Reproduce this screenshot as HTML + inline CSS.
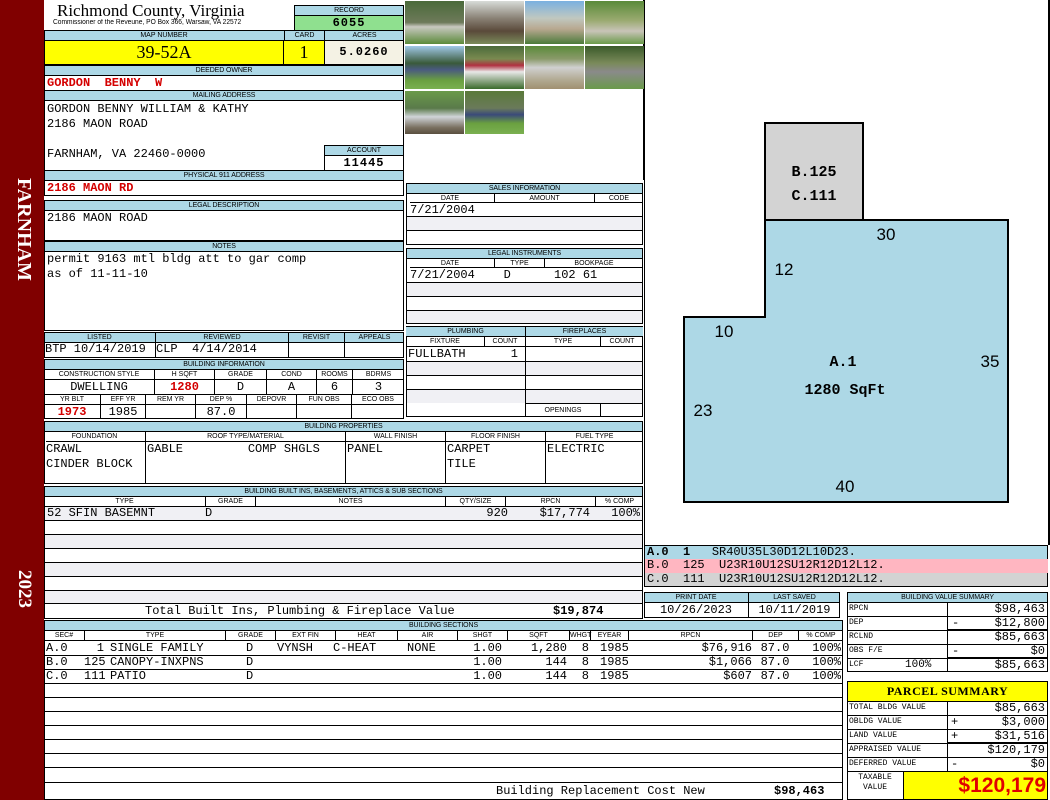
<!DOCTYPE html>
<html><head><meta charset="utf-8"><style>
*{box-sizing:border-box;margin:0;padding:0}
body{width:1050px;height:800px;position:relative;background:#fff;overflow:hidden;font-family:"Liberation Mono",monospace;font-size:12px;color:#000}
div{position:absolute}
.h{background:#add8e6;font-family:"Liberation Sans",sans-serif;font-size:7px;text-align:center;line-height:10px;height:10px;border:1px solid #000;border-bottom:none;letter-spacing:-0.1px}
.l{font-family:"Liberation Sans",sans-serif;font-size:7px;text-align:center;line-height:10px;height:10px;border:1px solid #000;border-bottom:none;border-right:none}
.bx{border:1px solid #000}
.v{line-height:15px;white-space:pre}
.r{color:#d40000;font-weight:bold}
.s{background:#f0f0f4}
.c{text-align:center}
.rt{text-align:right}
</style></head><body>
<div style="left:0;top:0;width:44px;height:800px;background:#800000"></div>
<div style="left:8px;top:178px;width:30px;height:130px;color:#fff;font-family:'Liberation Serif',serif;font-size:20px;font-weight:bold;writing-mode:vertical-rl;line-height:28px">FARNHAM</div>
<div style="left:8px;top:570px;width:30px;height:60px;color:#fff;font-family:'Liberation Serif',serif;font-size:19px;font-weight:bold;writing-mode:vertical-rl;line-height:28px">2023</div>

<div style="left:57px;top:1px;font-family:'Liberation Serif',serif;font-size:17px;white-space:nowrap">Richmond County, Virginia</div>
<div style="left:53px;top:19px;font-family:'Liberation Sans',sans-serif;font-size:7px;white-space:nowrap;transform:scaleX(0.95);transform-origin:left">Commissioner of the Reveune, PO Box 366, Warsaw, VA 22572</div>
<div class="h" style="left:294px;top:5px;width:110px">RECORD</div>
<div style="left:294px;top:15px;width:110px;height:16px;background:#8fe08f;border:1px solid #000;text-align:center;font-weight:bold;line-height:14px;letter-spacing:1px">6055</div>

<div class="h" style="left:44px;top:30px;width:360px"></div>
<div class="l" style="left:44px;top:30px;width:240px;border-left:none">MAP NUMBER</div>
<div class="l" style="left:284px;top:30px;width:40px">CARD</div>
<div class="l" style="left:324px;top:30px;width:80px">ACRES</div>
<div class="bx" style="left:44px;top:40px;width:240px;height:25px;background:#ffff00;text-align:center;font-family:'Liberation Serif',serif;font-size:18px;line-height:23px">39-52A</div>
<div class="bx" style="left:283px;top:40px;width:42px;height:25px;background:#ffff00;text-align:center;font-family:'Liberation Serif',serif;font-size:18px;line-height:23px">1</div>
<div class="bx" style="left:324px;top:40px;width:80px;height:25px;background:#f4f2e4;text-align:center;font-weight:bold;line-height:23px;letter-spacing:1px">5.0260</div>

<div class="h" style="left:44px;top:65px;width:360px">DEEDED OWNER</div>
<div class="bx v r" style="left:44px;top:75px;width:360px;height:16px;padding-left:2px">GORDON  BENNY  W</div>
<div class="h" style="left:44px;top:90px;width:360px">MAILING ADDRESS</div>
<div class="bx v" style="left:44px;top:100px;width:360px;height:71px;padding:1px 2px">GORDON BENNY WILLIAM &amp; KATHY
2186 MAON ROAD

FARNHAM, VA 22460-0000</div>
<div class="h" style="left:324px;top:145px;width:80px">ACCOUNT</div>
<div class="bx c" style="left:324px;top:155px;width:80px;height:16px;font-weight:bold;letter-spacing:1px;line-height:15px">11445</div>
<div class="h" style="left:44px;top:170px;width:360px">PHYSICAL 911 ADDRESS</div>
<div class="bx v r" style="left:44px;top:180px;width:360px;height:16px;padding-left:2px">2186 MAON RD</div>

<div class="h" style="left:44px;top:200px;width:360px">LEGAL DESCRIPTION</div>
<div class="bx v" style="left:44px;top:210px;width:360px;height:31px;padding-left:2px">2186 MAON ROAD</div>
<div class="h" style="left:44px;top:241px;width:360px">NOTES</div>
<div class="bx v" style="left:44px;top:251px;width:360px;height:80px;padding-left:2px">permit 9163 mtl bldg att to gar comp
as of 11-11-10</div>

<div class="h" style="left:44px;top:332px;width:360px"></div>
<div class="l" style="left:44px;top:332px;width:111px;border-left:none">LISTED</div>
<div class="l" style="left:155px;top:332px;width:133px">REVIEWED</div>
<div class="l" style="left:288px;top:332px;width:56px">REVISIT</div>
<div class="l" style="left:344px;top:332px;width:60px">APPEALS</div>
<div class="bx" style="left:44px;top:342px;width:360px;height:16px"></div>
<div class="v" style="left:45px;top:342px">BTP 10/14/2019</div>
<div class="v" style="left:155px;top:342px;border-left:1px solid #000;height:16px">CLP  4/14/2014</div>
<div style="left:288px;top:342px;width:1px;height:16px;background:#000"></div>
<div style="left:344px;top:342px;width:1px;height:16px;background:#000"></div>

<div class="h" style="left:44px;top:359px;width:360px">BUILDING INFORMATION</div>
<div class="bx" style="left:44px;top:369px;width:360px;height:50px"></div>
<div class="l" style="left:44px;top:369px;width:110px;border-left:none">CONSTRUCTION STYLE</div>
<div class="l" style="left:154px;top:369px;width:60px">H SQFT</div>
<div class="l" style="left:214px;top:369px;width:52px">GRADE</div>
<div class="l" style="left:266px;top:369px;width:50px">COND</div>
<div class="l" style="left:316px;top:369px;width:36px">ROOMS</div>
<div class="l" style="left:352px;top:369px;width:52px">BDRMS</div>
<div class="v c" style="left:44px;top:379px;width:110px;border-top:1px solid #000">DWELLING</div>
<div class="v c r" style="left:154px;top:379px;width:60px;border:1px solid #000;border-bottom:none;border-right:none">1280</div>
<div class="v c" style="left:214px;top:379px;width:52px;border:1px solid #000;border-bottom:none;border-right:none">D</div>
<div class="v c" style="left:266px;top:379px;width:50px;border:1px solid #000;border-bottom:none;border-right:none">A</div>
<div class="v c" style="left:316px;top:379px;width:36px;border:1px solid #000;border-bottom:none;border-right:none">6</div>
<div class="v c" style="left:352px;top:379px;width:52px;border:1px solid #000;border-bottom:none;border-right:none">3</div>
<div class="l" style="left:44px;top:394px;width:56px;border-left:none">YR BLT</div>
<div class="l" style="left:100px;top:394px;width:45px">EFF YR</div>
<div class="l" style="left:145px;top:394px;width:50px">REM YR</div>
<div class="l" style="left:195px;top:394px;width:51px">DEP %</div>
<div class="l" style="left:246px;top:394px;width:50px">DEPOVR</div>
<div class="l" style="left:296px;top:394px;width:55px">FUN OBS</div>
<div class="l" style="left:351px;top:394px;width:53px">ECO OBS</div>
<div class="v c r" style="left:44px;top:404px;width:56px;height:15px;border-top:1px solid #000;line-height:14px">1973</div>
<div class="v c" style="left:100px;top:404px;width:45px;height:15px;border:1px solid #000;border-bottom:none;border-right:none;line-height:14px">1985</div>
<div style="left:145px;top:404px;width:50px;height:15px;border-left:1px solid #000;border-top:1px solid #000"></div>
<div class="v c" style="left:195px;top:404px;width:51px;height:15px;border:1px solid #000;border-bottom:none;border-right:none;line-height:14px">87.0</div>
<div style="left:246px;top:404px;width:50px;height:15px;border-left:1px solid #000;border-top:1px solid #000"></div>
<div style="left:296px;top:404px;width:55px;height:15px;border-left:1px solid #000;border-top:1px solid #000"></div>
<div style="left:351px;top:404px;width:53px;height:15px;border-left:1px solid #000;border-top:1px solid #000"></div>

<!-- photos -->
<div style="left:404px;top:0;width:240px;height:180px;border-right:1px solid #000"></div>
<div style="left:405px;top:1px;width:59px;height:43px;background:linear-gradient(#4a6a3a 0,#6e7a5a 50%,#c8c8c0 60%,#5b8a3a 100%)"></div>
<div style="left:465px;top:1px;width:59px;height:43px;background:linear-gradient(#d8dcd8 0,#8a8276 40%,#5a4a3a 70%,#7a8a5a 100%)"></div>
<div style="left:525px;top:1px;width:59px;height:43px;background:linear-gradient(#7ab0e0 0,#c0c8c0 40%,#b8a890 65%,#4a7a3a 100%)"></div>
<div style="left:585px;top:1px;width:59px;height:43px;background:linear-gradient(#5a8a3a 0,#9aaa70 45%,#c8c4b8 70%,#6a9a4a 100%)"></div>
<div style="left:405px;top:46px;width:59px;height:43px;background:linear-gradient(#a0c8e8 0,#3a5a3a 40%,#4a5a80 55%,#6aa040 80%,#7ab050 100%)"></div>
<div style="left:465px;top:46px;width:59px;height:43px;background:linear-gradient(#4a6a3a 0,#7a8a50 30%,#b03040 45%,#e8e8e8 60%,#3a6a2a 100%)"></div>
<div style="left:525px;top:46px;width:59px;height:43px;background:linear-gradient(#5a8a3a 0,#8a9a6a 30%,#d0d0d0 50%,#b0a890 80%,#a09070 100%)"></div>
<div style="left:585px;top:46px;width:59px;height:43px;background:linear-gradient(#3a5a2a 0,#7a8a5a 40%,#8a8a8a 60%,#6a9a4a 100%)"></div>
<div style="left:405px;top:91px;width:59px;height:43px;background:linear-gradient(#6a9a4a 0,#5a7a4a 40%,#d0d4d8 60%,#7a7060 85%,#5a5040 100%)"></div>
<div style="left:465px;top:91px;width:59px;height:43px;background:linear-gradient(#5a7a3a 0,#6a7a5a 40%,#3a4a7a 55%,#6aa040 75%,#7ab050 100%)"></div>

<!-- sales -->
<div class="h" style="left:406px;top:183px;width:237px">SALES INFORMATION</div>
<div class="bx" style="left:406px;top:193px;width:237px;height:52px"></div>
<div class="l" style="left:406px;top:193px;width:88px;border-left:none">DATE</div>
<div class="l" style="left:494px;top:193px;width:100px">AMOUNT</div>
<div class="l" style="left:594px;top:193px;width:49px">CODE</div>
<div class="v" style="left:410px;top:202px;width:232px;height:15px;border-top:1px solid #000">7/21/2004</div>
<div class="s" style="left:407px;top:216px;width:235px;height:14px;border-top:1px solid #000"></div>
<div style="left:407px;top:230px;width:235px;height:14px;border-top:1px solid #000"></div>

<div class="h" style="left:406px;top:248px;width:237px">LEGAL INSTRUMENTS</div>
<div class="bx" style="left:406px;top:258px;width:237px;height:66px"></div>
<div class="l" style="left:406px;top:258px;width:88px;border-left:none">DATE</div>
<div class="l" style="left:494px;top:258px;width:50px">TYPE</div>
<div class="l" style="left:544px;top:258px;width:99px">BOOKPAGE</div>
<div class="v" style="left:410px;top:267px;width:232px;height:15px;border-top:1px solid #000">7/21/2004    D      102 61</div>
<div class="s" style="left:407px;top:282px;width:235px;height:14px;border-top:1px solid #000"></div>
<div style="left:407px;top:296px;width:235px;height:14px;border-top:1px solid #000"></div>
<div class="s" style="left:407px;top:310px;width:235px;height:13px;border-top:1px solid #000"></div>

<!-- plumbing -->
<div class="h" style="left:406px;top:326px;width:237px"></div>
<div class="l" style="left:406px;top:326px;width:119px;border-left:none;background:#add8e6">PLUMBING</div>
<div class="l" style="left:525px;top:326px;width:118px;background:#add8e6">FIREPLACES</div>
<div class="bx" style="left:406px;top:336px;width:237px;height:81px"></div>
<div class="l" style="left:406px;top:336px;width:78px;border-left:none">FIXTURE</div>
<div class="l" style="left:484px;top:336px;width:41px">COUNT</div>
<div class="l" style="left:525px;top:336px;width:75px">TYPE</div>
<div class="l" style="left:600px;top:336px;width:43px">COUNT</div>
<div style="left:525px;top:336px;width:1px;height:81px;background:#000"></div>
<div class="v" style="left:408px;top:347px;width:110px">FULLBATH</div>
<div class="v" style="left:480px;top:347px;width:38px;text-align:right">1</div>
<div style="left:407px;top:346px;width:235px;height:1px;background:#000"></div>
<div class="s" style="left:407px;top:361px;width:118px;height:14px;border-top:1px solid #000"></div>
<div class="s" style="left:526px;top:361px;width:116px;height:14px;border-top:1px solid #000"></div>
<div style="left:407px;top:375px;width:235px;height:14px;border-top:1px solid #000"></div>
<div class="s" style="left:407px;top:389px;width:118px;height:14px;border-top:1px solid #000"></div>
<div class="s" style="left:526px;top:389px;width:116px;height:14px;border-top:1px solid #000"></div>
<div class="l" style="left:525px;top:403px;width:75px;height:13px;line-height:13px">OPENINGS</div>
<div style="left:600px;top:403px;width:43px;height:13px;border-left:1px solid #000;border-top:1px solid #000"></div>

<!-- building properties -->
<div class="h" style="left:44px;top:421px;width:599px">BUILDING PROPERTIES</div>
<div class="bx" style="left:44px;top:431px;width:599px;height:53px"></div>
<div class="l" style="left:44px;top:431px;width:101px;border-left:none">FOUNDATION</div>
<div class="l" style="left:145px;top:431px;width:200px">ROOF TYPE/MATERIAL</div>
<div class="l" style="left:345px;top:431px;width:100px">WALL FINISH</div>
<div class="l" style="left:445px;top:431px;width:100px">FLOOR FINISH</div>
<div class="l" style="left:545px;top:431px;width:98px">FUEL TYPE</div>
<div class="v" style="left:46px;top:441px;width:99px;height:42px;border-top:1px solid #000">CRAWL
CINDER BLOCK</div>
<div class="v" style="left:145px;top:441px;width:200px;height:42px;border:1px solid #000;border-bottom:none;border-right:none;padding-left:1px">GABLE         COMP SHGLS</div>
<div class="v" style="left:345px;top:441px;width:100px;height:42px;border:1px solid #000;border-bottom:none;border-right:none;padding-left:1px">PANEL</div>
<div class="v" style="left:445px;top:441px;width:100px;height:42px;border:1px solid #000;border-bottom:none;border-right:none;padding-left:1px">CARPET
TILE</div>
<div class="v" style="left:545px;top:441px;width:98px;height:42px;border:1px solid #000;border-bottom:none;border-right:none;padding-left:1px">ELECTRIC</div>

<!-- built ins -->
<div class="h" style="left:44px;top:486px;width:599px">BUILDING BUILT INS, BASEMENTS, ATTICS &amp; SUB SECTIONS</div>
<div class="bx" style="left:44px;top:496px;width:599px;height:123px"></div>
<div class="l" style="left:44px;top:496px;width:161px;border-left:none">TYPE</div>
<div class="l" style="left:205px;top:496px;width:50px">GRADE</div>
<div class="l" style="left:255px;top:496px;width:190px">NOTES</div>
<div class="l" style="left:445px;top:496px;width:60px">QTY/SIZE</div>
<div class="l" style="left:505px;top:496px;width:90px">RPCN</div>
<div class="l" style="left:595px;top:496px;width:48px">% COMP</div>
<div class="v s" style="left:45px;top:506px;width:597px;height:14px;border-top:1px solid #000;line-height:13px;padding-left:2px">52 SFIN BASEMNT</div>
<div class="v" style="left:205px;top:506px;line-height:14px">D</div>
<div class="v" style="left:460px;top:506px;width:48px;line-height:14px;text-align:right">920</div>
<div class="v" style="left:505px;top:506px;width:85px;line-height:14px;text-align:right">$17,774</div>
<div class="v" style="left:595px;top:506px;width:45px;line-height:14px;text-align:right">100%</div>
<div style="left:45px;top:520px;width:597px;height:14px;border-top:1px solid #000"></div>
<div class="s" style="left:45px;top:534px;width:597px;height:14px;border-top:1px solid #000"></div>
<div style="left:45px;top:548px;width:597px;height:14px;border-top:1px solid #000"></div>
<div class="s" style="left:45px;top:562px;width:597px;height:14px;border-top:1px solid #000"></div>
<div style="left:45px;top:576px;width:597px;height:14px;border-top:1px solid #000"></div>
<div class="s" style="left:45px;top:590px;width:597px;height:13px;border-top:1px solid #000"></div>
<div class="v" style="left:45px;top:603px;width:597px;height:15px;border-top:1px solid #000;line-height:15px"><span style="position:absolute;left:100px">Total Built Ins, Plumbing &amp; Fireplace Value</span><span style="position:absolute;left:508px;font-weight:bold">$19,874</span></div>

<!-- sketch -->
<div style="left:644px;top:0;width:406px;height:545px;border-left:1px solid #000;border-right:2px solid #000"></div>
<svg style="position:absolute;left:0;top:0" width="1050" height="545">
<rect x="765" y="123" width="98" height="97" fill="#d3d3d3" stroke="#000" stroke-width="2"/>
<polygon points="765,220 1008,220 1008,502 684,502 684,317 765,317" fill="#add8e6" stroke="#000" stroke-width="2"/>
<g font-family="Liberation Mono,monospace" font-weight="bold" font-size="15" text-anchor="middle">
<text x="814" y="176">B.125</text><text x="814" y="200">C.111</text>
<text x="843" y="366">A.1</text><text x="845" y="394">1280 SqFt</text></g>
<g font-family="Liberation Sans,sans-serif" font-size="17" text-anchor="middle">
<text x="886" y="240">30</text><text x="784" y="275">12</text><text x="724" y="337">10</text>
<text x="990" y="367">35</text><text x="703" y="416">23</text><text x="845" y="492">40</text></g>
</svg>
<div class="v" style="left:644px;top:545px;width:404px;height:14px;background:#add8e6;border:1px solid #000;border-bottom:none;line-height:13px;font-size:12px;padding-left:2px"><b>A.0  1   </b>SR40U35L30D12L10D23.</div>
<div class="v" style="left:644px;top:559px;width:404px;height:14px;background:#ffb6c1;border-left:1px solid #000;line-height:13px;font-size:12px;padding-left:2px">B.0  125  U23R10U12SU12R12D12L12.</div>
<div class="v" style="left:644px;top:573px;width:404px;height:14px;background:#d3d3d3;border:1px solid #000;border-top:none;line-height:13px;font-size:12px;padding-left:2px">C.0  111  U23R10U12SU12R12D12L12.</div>

<!-- print date -->
<div class="h" style="left:644px;top:592px;width:196px"></div>
<div class="l" style="left:644px;top:592px;width:104px;border-left:none">PRINT DATE</div>
<div class="l" style="left:748px;top:592px;width:92px">LAST SAVED</div>
<div class="bx" style="left:644px;top:602px;width:196px;height:16px"></div>
<div class="v c" style="left:644px;top:602px;width:104px;line-height:16px">10/26/2023</div>
<div class="v c" style="left:748px;top:602px;width:92px;line-height:16px;border-left:1px solid #000;height:16px">10/11/2019</div>

<!-- building sections -->
<div class="h" style="left:44px;top:620px;width:799px">BUILDING SECTIONS</div>
<div class="bx" style="left:44px;top:630px;width:799px;height:170px"></div>
<div class="l" style="left:44px;top:630px;width:40px;border-left:none">SEC#</div>
<div class="l" style="left:84px;top:630px;width:141px">TYPE</div>
<div class="l" style="left:225px;top:630px;width:50px">GRADE</div>
<div class="l" style="left:275px;top:630px;width:60px">EXT FIN</div>
<div class="l" style="left:335px;top:630px;width:62px">HEAT</div>
<div class="l" style="left:397px;top:630px;width:60px">AIR</div>
<div class="l" style="left:457px;top:630px;width:50px">SHGT</div>
<div class="l" style="left:507px;top:630px;width:62px">SQFT</div>
<div class="l" style="left:569px;top:630px;width:21px">WHGT</div>
<div class="l" style="left:590px;top:630px;width:38px">EYEAR</div>
<div class="l" style="left:628px;top:630px;width:124px">RPCN</div>
<div class="l" style="left:752px;top:630px;width:46px">DEP</div>
<div class="l" style="left:798px;top:630px;width:45px">% COMP</div>
<div style="left:45px;top:640px;width:797px;height:1px;background:#000"></div>
<div class="v" style="left:46px;top:641px;line-height:14px">A.0
B.0
C.0</div>
<div class="v" style="left:84px;top:641px;width:20px;text-align:right;line-height:14px">1
125
111</div>
<div class="v" style="left:110px;top:641px;line-height:14px">SINGLE FAMILY
CANOPY-INXPNS
PATIO</div>
<div class="v" style="left:246px;top:641px;line-height:14px">D
D
D</div>
<div class="v" style="left:277px;top:641px;line-height:14px">VYNSH</div>
<div class="v" style="left:333px;top:641px;line-height:14px">C-HEAT</div>
<div class="v" style="left:407px;top:641px;line-height:14px">NONE</div>
<div class="v rt" style="left:457px;top:641px;width:45px;line-height:14px">1.00
1.00
1.00</div>
<div class="v rt" style="left:507px;top:641px;width:60px;line-height:14px">1,280
144
144</div>
<div class="v rt" style="left:569px;top:641px;width:20px;line-height:14px">8
8
8</div>
<div class="v" style="left:600px;top:641px;line-height:14px">1985
1985
1985</div>
<div class="v rt" style="left:628px;top:641px;width:124px;line-height:14px">$76,916
$1,066
$607</div>
<div class="v c" style="left:752px;top:641px;width:46px;line-height:14px">87.0
87.0
87.0</div>
<div class="v rt" style="left:798px;top:641px;width:43px;line-height:14px">100%
100%
100%</div>
<div style="left:45px;top:655px;width:797px;height:1px;background:#000"></div>
<div style="left:45px;top:669px;width:797px;height:1px;background:#000"></div>
<div style="left:45px;top:683px;width:797px;height:1px;background:#000"></div>
<div style="left:45px;top:697px;width:797px;height:1px;background:#000"></div>
<div style="left:45px;top:711px;width:797px;height:1px;background:#000"></div>
<div style="left:45px;top:725px;width:797px;height:1px;background:#000"></div>
<div style="left:45px;top:739px;width:797px;height:1px;background:#000"></div>
<div style="left:45px;top:753px;width:797px;height:1px;background:#000"></div>
<div style="left:45px;top:767px;width:797px;height:1px;background:#000"></div>
<div style="left:45px;top:782px;width:797px;height:1px;background:#000"></div>
<div class="v" style="left:496px;top:783px;line-height:16px">Building Replacement Cost New</div>
<div class="v" style="left:774px;top:783px;line-height:16px;font-weight:bold">$98,463</div>

<!-- value summary -->
<div class="h" style="left:847px;top:592px;width:201px">BUILDING VALUE SUMMARY</div>
<div class="bx" style="left:847px;top:602px;width:201px;height:70px"></div>
<div style="left:947px;top:602px;width:1px;height:70px;background:#000"></div>
<div style="left:848px;top:616px;width:199px;height:1px;background:#000"></div>
<div style="left:848px;top:630px;width:199px;height:1px;background:#000"></div>
<div style="left:848px;top:644px;width:199px;height:1px;background:#000"></div>
<div style="left:848px;top:658px;width:199px;height:1px;background:#000"></div>
<div style="left:948px;top:629px;width:99px;height:2px;background:#000"></div>
<div style="left:948px;top:657px;width:99px;height:2px;background:#000"></div>
<div class="v" style="left:849px;top:602px;font-size:8px;line-height:14px">RPCN
DEP
RCLND
OBS F/E
LCF</div>
<div class="v" style="left:905px;top:658px;font-size:11px;line-height:14px">100%</div>
<div class="v" style="left:952px;top:602px;line-height:14px">
-

-</div>
<div class="v rt" style="left:948px;top:602px;width:97px;line-height:14px;font-size:12px">$98,463
$12,800
$85,663
$0
$85,663</div>

<!-- parcel summary -->
<div class="bx" style="left:847px;top:681px;width:201px;height:21px;background:#ffff00;text-align:center;font-family:'Liberation Serif',serif;font-weight:bold;font-size:12px;line-height:19px;letter-spacing:0.5px">PARCEL SUMMARY</div>
<div class="bx" style="left:847px;top:701px;width:201px;height:99px"></div>
<div style="left:903px;top:771px;width:145px;height:29px;background:#ffff00;border:1px solid #000"></div>
<div style="left:947px;top:701px;width:1px;height:70px;background:#000"></div>
<div style="left:848px;top:715px;width:199px;height:1px;background:#000"></div>
<div style="left:848px;top:729px;width:199px;height:1px;background:#000"></div>
<div style="left:848px;top:743px;width:199px;height:1px;background:#000"></div>
<div style="left:848px;top:757px;width:199px;height:1px;background:#000"></div>
<div style="left:848px;top:771px;width:199px;height:1px;background:#000"></div>
<div style="left:948px;top:742px;width:99px;height:2px;background:#000"></div>
<div class="v" style="left:849px;top:701px;font-size:8px;line-height:14px">TOTAL BLDG VALUE
OBLDG VALUE
LAND VALUE
APPRAISED VALUE
DEFERRED VALUE</div>
<div class="v" style="left:951px;top:701px;line-height:14px">
+
+

-</div>
<div class="v rt" style="left:948px;top:701px;width:97px;line-height:14px;font-size:12px">$85,663
$3,000
$31,516
$120,179
$0</div>
<div class="v c" style="left:848px;top:773px;width:54px;font-size:8px;line-height:10px">TAXABLE
VALUE</div>
<div style="left:903px;top:771px;width:143px;text-align:right;color:#e00000;font-family:'Liberation Sans',sans-serif;font-weight:bold;font-size:21px;line-height:29px">$120,179</div>
</body></html>
